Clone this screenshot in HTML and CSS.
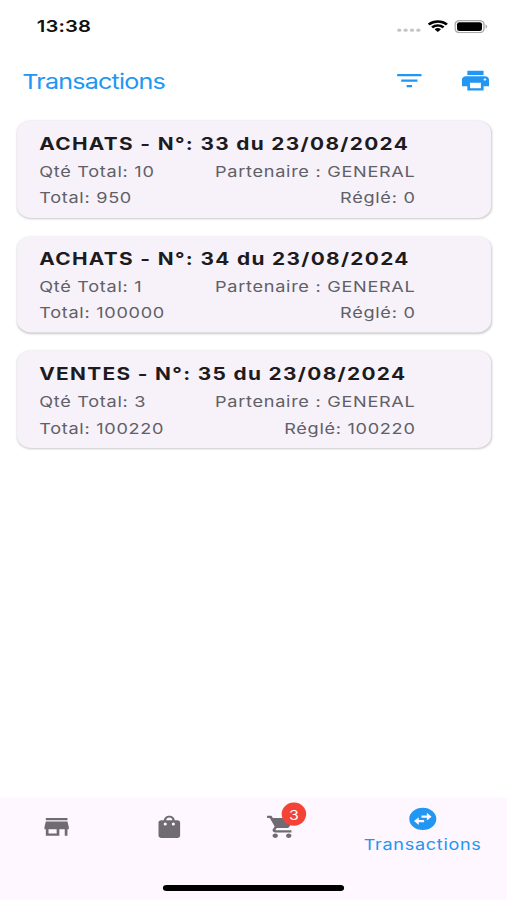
FILE: index.html
```html
<!DOCTYPE html>
<html lang="fr">
<head>
<meta charset="utf-8">
<title>Transactions</title>
<link rel="stylesheet" href="styles.css">
</head>
<body>
<div class="screen">
  <div class="status">
    <span class="time">13:38</span>
    <div class="signals">
      <svg class="dots" viewBox="0 0 20 4"><circle cx="2" cy="2" r="1.7"/><circle cx="7.2" cy="2" r="1.7"/><circle cx="12.4" cy="2" r="1.7"/><circle cx="17.6" cy="2" r="1.7"/></svg>
      <svg class="wifi" viewBox="0 0 17 12"><path d="M8.5 2.4c2.4 0 4.7.9 6.4 2.6.1.1.3.1.4 0l1.2-1.3c.2-.1.2-.3 0-.5a11.6 11.6 0 0 0-16 0c-.2.2-.2.4 0 .5L1.700 5c.1.100.3.100.4 0a9.200 9.200 0 0 1 6.400-2.600zm0 4c1.300 0 2.600.5 3.600 1.400.100.100.3.100.4 0l1.200-1.300c.2-.1.2-.3 0-.5a7.600 7.600 0 0 0-10.400 0c-.2.2-.2.400 0 .5l1.200 1.300c.1.100.3.100.4 0a5.300 5.300 0 0 1 3.600-1.400zm2.400 2.800c.100-.1.100-.3 0-.5a3.700 3.700 0 0 0-4.800 0c-.1.2-.1.400 0 .5l2.100 2.100c.2.200.4.200.6 0z"/></svg>
      <svg class="battery" viewBox="0 0 28 13"><rect x=".6" y=".6" width="23.600" height="11.800" rx="3.600" fill="none" stroke="#a9a9a9" stroke-width="1.200"/><rect x="2.200" y="2.200" width="20.400" height="8.600" rx="2"/><path d="M25.500 4.500c1.700.5 1.700 3.500 0 4z" fill="#a9a9a9"/></svg>
    </div>
  </div>
  <header class="bar">
    <h1>Transactions</h1>
    <div class="actions">
      <svg class="icon" viewBox="0 0 24 24"><path d="M10 18h4v-2h-4v2zM3 6v2h18V6H3zm3 7h12v-2H6v2z"/></svg>
      <svg class="icon" viewBox="0 0 24 24"><path d="M19 8H5c-1.660 0-3 1.340-3 3v6h4v4h12v-4h4v-6c0-1.660-1.340-3-3-3zm-3 11H8v-5h8v5zm3-7c-.55 0-1-.45-1-1s.45-1 1-1 1 .45 1 1-.45 1-1 1zm-1-9H6v4h12V3z"/></svg>
    </div>
  </header>
  <main class="list">
    <article class="card">
      <h2>ACHATS - N°: 33 du 23/08/2024</h2>
      <div class="row"><span>Qté Total: 10</span><span>Partenaire : GENERAL</span></div>
      <div class="row"><span>Total: 950</span><span>Réglé: 0</span></div>
    </article>
    <article class="card">
      <h2>ACHATS - N°: 34 du 23/08/2024</h2>
      <div class="row"><span>Qté Total: 1</span><span>Partenaire : GENERAL</span></div>
      <div class="row"><span>Total: 100000</span><span>Réglé: 0</span></div>
    </article>
    <article class="card">
      <h2>VENTES - N°: 35 du 23/08/2024</h2>
      <div class="row"><span>Qté Total: 3</span><span>Partenaire : GENERAL</span></div>
      <div class="row"><span>Total: 100220</span><span>Réglé: 100220</span></div>
    </article>
  </main>
  <footer class="bottom">
    <nav class="tabs">
      <a class="tab"><svg class="icon" viewBox="0 0 24 24"><path d="M20 4H4v2h16V4zm1 10v-2l-1-5H4l-1 5v2h1v6h10v-6h4v6h2v-6h1zm-9 4H6v-4h6v4z"/></svg></a>
      <a class="tab"><svg class="icon" viewBox="0 0 24 24"><path fill-rule="evenodd" d="M18 6h-2c0-2.210-1.790-4-4-4S8 3.790 8 6H6c-1.100 0-2 .9-2 2v12c0 1.100.9 2 2 2h12c1.100 0 2-.9 2-2V8c0-1.100-.9-2-2-2zm-6-2.600c1.300 0 2.300 1.200 2.300 2.600H9.700c0-1.400 1-2.600 2.300-2.600zM9 8a1.150 1.400 0 1 1 0 2.800 1.150 1.400 0 0 1 0-2.800zm6 0a1.150 1.400 0 1 1 0 2.800 1.150 1.400 0 0 1 0-2.800z"/></svg></a>
      <a class="tab"><span class="cart"><svg class="icon" viewBox="0 0 24 24"><path d="M7 18c-1.100 0-1.990.9-1.990 2S5.900 22 7 22s2-.9 2-2-.9-2-2-2zM1 2v2h2l3.600 7.590-1.350 2.450c-.16.28-.25.61-.25.960 0 1.100.9 2 2 2h12v-2H7.420c-.14 0-.25-.11-.25-.25l.03-.12.9-1.630h7.450c.75 0 1.410-.41 1.750-1.030l3.580-6.490c.08-.14.12-.31.12-.48 0-.55-.45-1-1-1H5.210l-.94-2H1zm16 16c-1.100 0-1.990.9-1.990 2s.89 2 1.990 2 2-.9 2-2-.9-2-2-2z"/></svg><span class="badge">3</span></span></a>
      <a class="tab active"><svg class="icon" viewBox="0 0 24 24"><path d="M22 12c0-5.520-4.480-10-10-10S2 6.480 2 12s4.480 10 10 10 10-4.480 10-10zm-7-5.500l3.500 3.500-3.500 3.500V11h-4V9h4V6.500zm-6 11L5.500 14 9 10.500V13h4v2H9v2.500z"/></svg><span class="label">Transactions</span></a>
    </nav>
    <div class="home"></div>
  </footer>
</div>
</body>
</html>
```
FILE: styles.css
```css
* { box-sizing: border-box; }
html, body { margin: 0; width: 507px; height: 900px; overflow: hidden; background: #fff; }
/* 414 x 896 logical screen stretched to the window */
.screen {
  width: 414px;
  height: 896px;
  transform: scale(1.22464, 1.00446);
  transform-origin: 0 0;
  display: flex;
  flex-direction: column;
  font-family: Inter, "Liberation Sans", sans-serif;
  color: #1d1b20;
}
svg { display: block; flex: none; }
.icon { width: 26.500px; height: 26.500px; fill: currentColor; }

.status { height: 52px; padding: 0 15.500px 0 30px; display: flex; justify-content: space-between; }
.time { font-size: 16.500px; font-weight: 600; line-height: 20px; margin-top: 16px; letter-spacing: .1px; color: #111; }
.signals { display: flex; align-items: flex-start; }
.dots { width: 20px; height: 4px; margin: 28.300px 4.500px 0 0; fill: #c4c4c4; }
.wifi { width: 17px; height: 12.500px; margin: 19.500px 5px 0 0; }
.battery { width: 28px; height: 13px; margin-top: 19.500px; }

.bar { height: 57px; padding: 0 12.700px 0 18.200px; display: flex; justify-content: space-between; align-items: center; color: #2196f3; }
h1 { margin: 2px 0 0; font-size: 20.500px; font-weight: 400; line-height: 28px; letter-spacing: -.65px; }
.actions { display: flex; gap: 27px; }

.list { flex: 1; padding: 11.300px 13px 0 13.600px; display: flex; flex-direction: column; gap: 18.200px; }
.card {
  height: 96.400px;
  padding: 10.700px 61.700px 0 18.400px;
  border-radius: 12px;
  background: #f7f2fa;
  box-shadow: 0 1px 2px rgba(0, 0, 0, .22);
}
h2 { margin: 0; font-size: 17px; font-weight: 700; line-height: 24px; letter-spacing: 1.100px; white-space: nowrap; }
.row { display: flex; justify-content: space-between; height: 26.500px; line-height: 33px; font-size: 14.800px; letter-spacing: .58px; color: #606066; white-space: nowrap; }

.bottom { height: 102px; background: #fef7ff; display: flex; flex-direction: column; align-items: center; }
.tabs { width: 100%; height: 60px; padding-left: .7px; display: flex; }
.tab { flex: 2; display: flex; flex-direction: column; align-items: center; justify-content: center; padding-bottom: 1px; color: #706b72; }
.active { flex: 3; color: #2196f3; justify-content: flex-start; padding-top: 8px; }
.label { font-size: 14.700px; line-height: 20px; letter-spacing: .6px; margin-top: 2px; }
.cart { position: relative; }
.badge {
  position: absolute;
  left: 13px;
  top: -11.500px;
  width: 20px;
  height: 23.500px;
  border-radius: 50%;
  background: #f44336;
  color: #fff;
  font-size: 13px;
  line-height: 24px;
  text-align: center;
}
.home { width: 148px; height: 6px; margin-top: 27.300px; border-radius: 3px; background: #000; }
```
